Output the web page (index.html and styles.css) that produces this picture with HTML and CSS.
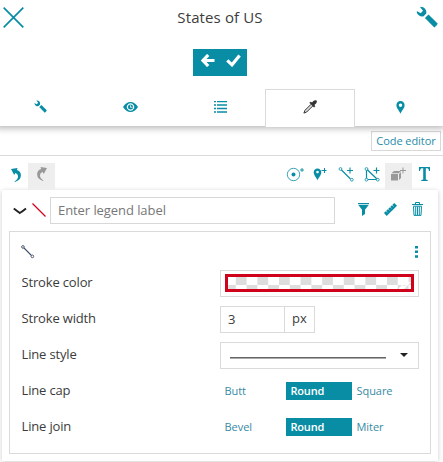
FILE: index.html
```html
<!DOCTYPE html>
<html lang="en">
<head>
<meta charset="utf-8">
<title>States of US</title>
<link rel="stylesheet" href="styles.css">
</head>
<body>
<svg class="defs" width="0" height="0">
  <symbol id="wrench" viewBox="0 0 22 22">
    <path d="M4.500 .7 A5.700 5.700 0 0 1 10.300 7.600 L7.600 10.300 A5.700 5.700 0 0 1 .6 5.700 L1.200 5.300 L4.700 7.200 L7 4.700 L4.200 1.300Z"/>
    <path d="M8.900 11.900 L12.500 8.500 L21.600 17.500 Q21.700 18.500 18.300 21.600Z"/>
  </symbol>
  <symbol id="segment" viewBox="0 0 16 16">
    <path d="M3.300 3.300 L11.800 11.800" fill="none" stroke="currentColor" stroke-width="1.400"/>
    <circle cx="2.200" cy="2.200" r="1.500" fill="#fff" stroke="currentColor"/>
    <circle cx="13" cy="13" r="1.500" fill="#fff" stroke="currentColor"/>
  </symbol>
</svg>

<header class="header">
  <svg class="close" width="21" height="21" viewBox="0 0 21 21"><path d="M.7 .7 L20.300 20.300 M20.300 .7 L.7 20.300" fill="none" stroke="currentColor" stroke-width="1.700"/></svg>
  <h1 class="title">States of US</h1>
  <svg class="settings" width="22" height="22"><use href="#wrench"/></svg>
</header>

<div class="confirm">
  <div class="confirm-buttons">
    <svg width="14" height="13" viewBox="0 0 14 13"><path d="M7.200 1 L2 6.500 L7.200 12 M2.200 6.500 H13.500" fill="none" stroke="#fff" stroke-width="3.200"/></svg>
    <svg width="15" height="13" viewBox="0 0 15 13"><path d="M1.300 6.300 L6 10.800 L13.600 1.500" fill="none" stroke="#fff" stroke-width="3.200"/></svg>
  </div>
</div>

<nav class="tabs">
  <div class="tab"><svg class="small-wrench" width="13" height="13"><use href="#wrench"/></svg></div>
  <div class="tab"><svg width="15" height="10" viewBox="0 0 15 10"><path fill-rule="evenodd" d="M0 5 Q3.200 0 7.500 0 T15 5 Q11.800 10 7.500 10 T0 5Z M7.500 1.300 a3.700 3.700 0 1 0 .01 0Z"/><circle cx="7.500" cy="5" r="2.500"/><path d="M7.500 3.300 V5.300 H9.500" fill="none" stroke="#fff" stroke-width=".8"/></svg></div>
  <div class="tab"><svg width="13" height="12" viewBox="0 0 13 12"><path d="M0 .5H2M3 .5H13M0 4H2M3 4H13M0 7.500H2M3 7.500H13M0 11H2M3 11H13" stroke="currentColor" stroke-width="1.300"/></svg></div>
  <div class="tab active"><svg width="14" height="14" viewBox="0 0 14 14"><path d="M8 4.300 L2 10.300 L.9 13.100 L3.700 12 L9.700 6" fill="#ddd" stroke="currentColor"/><path d="M6.300 2.700 L7.800 1.800 L9 2.600 Q11.500 -.9 13.500 .6 Q14.900 2.500 11.400 5 L12.300 6.200 L11 7.600Z"/></svg></div>
  <div class="tab"><svg width="9" height="13" viewBox="0 0 9 13"><path fill-rule="evenodd" d="M4.500 0 C7 0 8.600 1.800 8.600 4.200 C8.600 7.500 5 10.300 4.500 12.800 C4 10.300 .4 7.500 .4 4.200 C.4 1.800 2 0 4.500 0Z M4.500 2.500 a1.700 1.700 0 1 0 .01 0Z"/></svg></div>
</nav>

<div class="editor-bar"><button class="code-button">Code editor</button></div>

<div class="toolbar">
  <div class="tool undo"><svg width="11" height="14" viewBox="0 0 11 14"><path d="M0 1 L6.500 0 L5.800 2.100 Q10 3.500 9.900 7.500 Q9.700 12 4 14 L3.500 13.500 Q7.300 11 7 8 Q6.700 5.300 4.300 5 L3.200 7Z"/></svg></div>
  <div class="tool off"><svg width="11" height="14" viewBox="0 0 11 14"><path transform="translate(11 0) scale(-1 1)" d="M0 1 L6.500 0 L5.800 2.100 Q10 3.500 9.900 7.500 Q9.700 12 4 14 L3.500 13.500 Q7.300 11 7 8 Q6.700 5.300 4.300 5 L3.200 7Z"/></svg></div>
  <div class="tool first"><svg width="19" height="16" viewBox="0 0 19 16"><circle cx="8.500" cy="7.500" r="6.200" fill="none" stroke="currentColor" stroke-width=".8"/><circle cx="8.500" cy="7.500" r="2"/><path d="M15 3H19M17 1V5" stroke="currentColor" stroke-width=".9"/></svg></div>
  <div class="tool"><svg width="19" height="16" viewBox="0 0 19 16"><path fill-rule="evenodd" d="M6.500 1.500 C8.800 1.500 10.300 3.300 10.300 5.200 C10.300 8.500 7 11 6.500 13.500 C6 11 2.700 8.500 2.700 5.200 C2.700 3.300 4.200 1.500 6.500 1.500Z M6.500 3.700a1.300 1.300 0 1 0 .01 0Z"/><path d="M10.500 3.500H15.500M13.500 1V6" stroke="currentColor"/></svg></div>
  <div class="tool"><svg width="19" height="16" viewBox="0 0 19 16"><path d="M4 2.500 L13.500 12M10 3.500H16M13 .5V6.500" stroke="currentColor" stroke-width="1.100"/><circle cx="3.500" cy="2" r="1.400" fill="#fff" stroke="currentColor" stroke-width=".8"/><circle cx="14.800" cy="12.700" r="1.400" fill="#fff" stroke="currentColor" stroke-width=".8"/></svg></div>
  <div class="tool"><svg width="19" height="16" viewBox="0 0 19 16"><path d="M3.500 2V12.500H14.500L3.500 2M10.500 3.500H16.500M13.500 .5V6.500" fill="none" stroke="currentColor" stroke-width="1.200"/><g fill="#fff" stroke="currentColor" stroke-width=".8"><circle cx="3.500" cy="2" r="1.400"/><circle cx="3.500" cy="12.700" r="1.400"/><circle cx="14.800" cy="12.700" r="1.400"/></g></svg></div>
  <div class="tool off"><svg width="19" height="16" viewBox="0 0 19 16"><path d="M2 7H9V13.500H2Z M2.500 6.200L5 4H12L9.700 6.200Z M10 7L12 5V11L10 13Z"/><path d="M11 3.500H17M14 .5V6.500" stroke="currentColor"/></svg></div>
  <div class="tool text-tool"><svg width="11" height="14" viewBox="0 0 11 14"><path d="M0 0H11V4H10Q9.800 1.300 8.500 1.300H6.800V12.500L8.700 13V14H2.300V13L4.200 12.500V1.300H2.500Q1.200 1.300 1 4H0Z"/></svg></div>
</div>

<section class="card">
  <div class="legend">
    <svg class="chevron" width="14" height="8" viewBox="0 0 14 8"><path d="M.8 1.500 Q4 4 6.800 6 Q10 4 13 1.500" fill="none" stroke="#222" stroke-width="1.900"/></svg>
    <svg class="swatch" width="14" height="14" viewBox="0 0 14 14"><path d="M.5 .5L13.500 13.500" stroke="#d0021b" stroke-width="1.200"/></svg>
    <input class="label-input" type="text" placeholder="Enter legend label">
    <svg class="filter" width="11" height="13" viewBox="0 0 11 13"><path d="M0 0H11V1.300H0ZM.4 2H10.600L7 6.800V11L4 13V6.800Z"/></svg>
    <svg class="ruler" width="13" height="13" viewBox="0 0 13 13"><path d="M0 10L10.300 0L13 2.700L2.700 13Z"/><path d="M2 7.900l1.500 1.500M4 5.900l1.500 1.500M6 3.900l1.500 1.500M8 2l1.500 1.500" stroke="#fff" stroke-width=".6"/></svg>
    <svg class="trash" width="11" height="14" viewBox="0 0 11 14"><path d="M0 2.500H11M3.500 2V.5H7.500V2M1.200 4.200H9.800M1.500 4.500L2 13.400H9L9.500 4.500M3.700 4.500V13M5.500 4.500V13M7.300 4.500V13" fill="none" stroke="currentColor"/></svg>
  </div>

  <div class="panel">
    <div class="panel-head">
      <svg class="line-symbol" width="14" height="14"><use href="#segment"/></svg>
      <svg width="3" height="12" viewBox="0 0 3 12"><path d="M0 0H3V2.500H0ZM0 4.600H3V7.100H0ZM0 9.200H3V11.700H0Z"/></svg>
    </div>
    <div class="row">
      <span class="name">Stroke color</span>
      <div class="field color"><div class="checker"><svg width="12" height="7" viewBox="0 0 12 7"><path d="M0 6L3 3L6 4L10 0H12L5 7H0Z" fill="#fff"/></svg></div></div>
    </div>
    <div class="row">
      <span class="name">Stroke width</span>
      <div class="field number">3</div><div class="unit">px</div>
    </div>
    <div class="row">
      <span class="name">Line style</span>
      <div class="field select"><span class="sample"></span><span class="caret"></span></div>
    </div>
    <div class="row">
      <span class="name">Line cap</span>
      <div class="choices"><span>Butt</span><span class="chosen">Round</span><span>Square</span></div>
    </div>
    <div class="row">
      <span class="name">Line join</span>
      <div class="choices"><span>Bevel</span><span class="chosen">Round</span><span>Miter</span></div>
    </div>
  </div>
</section>
</body>
</html>
```
FILE: styles.css
```css
* { box-sizing: border-box; }
body {
  margin: 0;
  height: 462px;
  overflow: hidden;
  background: #fff;
  color: #3c3c3c;
  font: 13px/18px "Open Sans", "Noto Sans", sans-serif;
}
svg { display: block; flex: none; fill: currentColor; color: #088da5; }
.defs { position: absolute; }

.header { display: flex; justify-content: space-between; height: 49px; padding: 6px 5px 0 3px; }
.close { margin-top: 1px; }
.title { margin: 0; font-size: 15px; line-height: 23px; font-weight: 400; letter-spacing: .12px; }

.confirm { display: flex; justify-content: center; height: 40px; padding-right: 3px; }
.confirm-buttons { display: flex; gap: 11px; width: 54px; height: 27px; padding: 5px 0 0 8px; background: #088da5; }

.tabs { display: flex; width: 450px; height: 37px; margin-left: -5px; box-shadow: 0 2px 7px rgba(0,0,0,.3); clip-path: inset(0 0 -14px 0); }
.tab { width: 90px; height: 37px; display: flex; align-items: center; justify-content: center; padding: 0 0 2px 1px; }
.tab.active { width: 90px; height: 38px; border: 1px solid #dadada; border-bottom: 0; background: #fff; padding: 0 0 3px 0; }
.tab.active svg { color: #333; }
.tab:last-child { padding: 0; }

.editor-bar { display: flex; justify-content: flex-end; height: 30px; padding: 5px 2px 0; border-bottom: 1px solid #dadada; }
.code-button { width: 70px; height: 20px; padding: 0; border: 1px solid #d8d8d8; background: #fff; color: #278ca8; font: 11px/18px "Open Sans", sans-serif; letter-spacing: -.07px; white-space: nowrap; }

.toolbar { display: flex; height: 34px; padding: 7px 5px 0 2px; }
.tool { width: 26px; height: 27px; display: flex; align-items: flex-start; justify-content: center; padding-top: 4px; }
.undo { padding: 5px 0 0 2px; }
.text-tool { padding: 4px 2px 0 0; }
.tool.off { width: 27px; background: #eee; }
.tool.off svg { color: #999; }
.tool.first { margin-left: auto; }

.card { width: 436px; height: 271px; margin-left: 2px; padding: 7px 7px 0 7px; background: #fff; box-shadow: 0 1px 5px rgba(0,0,0,.2); }
.legend { display: flex; height: 34px; padding-left: 4px; }
.chevron { margin-top: 10px; }
.swatch { margin: 6px 4px 0 5px; }
.label-input { width: 285px; height: 27px; padding: 0 7px 1px; border: 1px solid #d8d8d8; font: 13px/18px "Open Sans", sans-serif; letter-spacing: -.07px; color: #444; background: #fff; }
.label-input::placeholder { color: #777; opacity: 1; }
.filter { margin: 6px 0 0 23px; }
.ruler { margin: 6px 0 0 15px; }
.trash { margin: 5px 0 0 15px; }

.panel { height: 223px; width: 422px; padding: 0 10px 0 11px; border: 1px solid #dadada; }
.panel-head { display: flex; justify-content: space-between; height: 33px; padding: 14px 2px 0 0; }
.line-symbol { margin-top: -1px; color: #33465f; }
.row { display: flex; align-items: center; height: 36px; }
.name { width: 199px; flex: none; padding-left: .5px; margin-top: -2px; letter-spacing: -.16px; }
.field, .unit { height: 27px; border: 1px solid #dadada; }
.color { width: 199px; padding: 3px 4px; }
.checker { display: flex; align-items: flex-end; justify-content: flex-end; height: 18px; border: 3px solid #d0021b; background: repeating-conic-gradient(#ddd 0 25%, #fff 0 50%) -3px 0 / 21.600px 16px; }
.number { width: 65px; padding: 3px 7px; line-height: 18px; }
.unit { width: 30px; border-left: 0; text-align: center; line-height: 22px; }
.select { display: flex; align-items: center; width: 199px; padding-left: 9px; }
.sample { width: 156px; height: 2px; margin-top: 5px; border-top: 1px solid #666; background: #aaa; }
.caret { margin-left: 14px; border: 4px solid transparent; border-top-color: #222; border-bottom: 0; }
.choices { display: flex; font-size: 11px; color: #388aa4; line-height: 18px; letter-spacing: -.05px; }
.choices span { width: 66px; height: 18px; padding-left: 4.500px; }
.choices .chosen { background: #088da5; color: #fff; font-weight: 600; letter-spacing: -.2px; }
```
